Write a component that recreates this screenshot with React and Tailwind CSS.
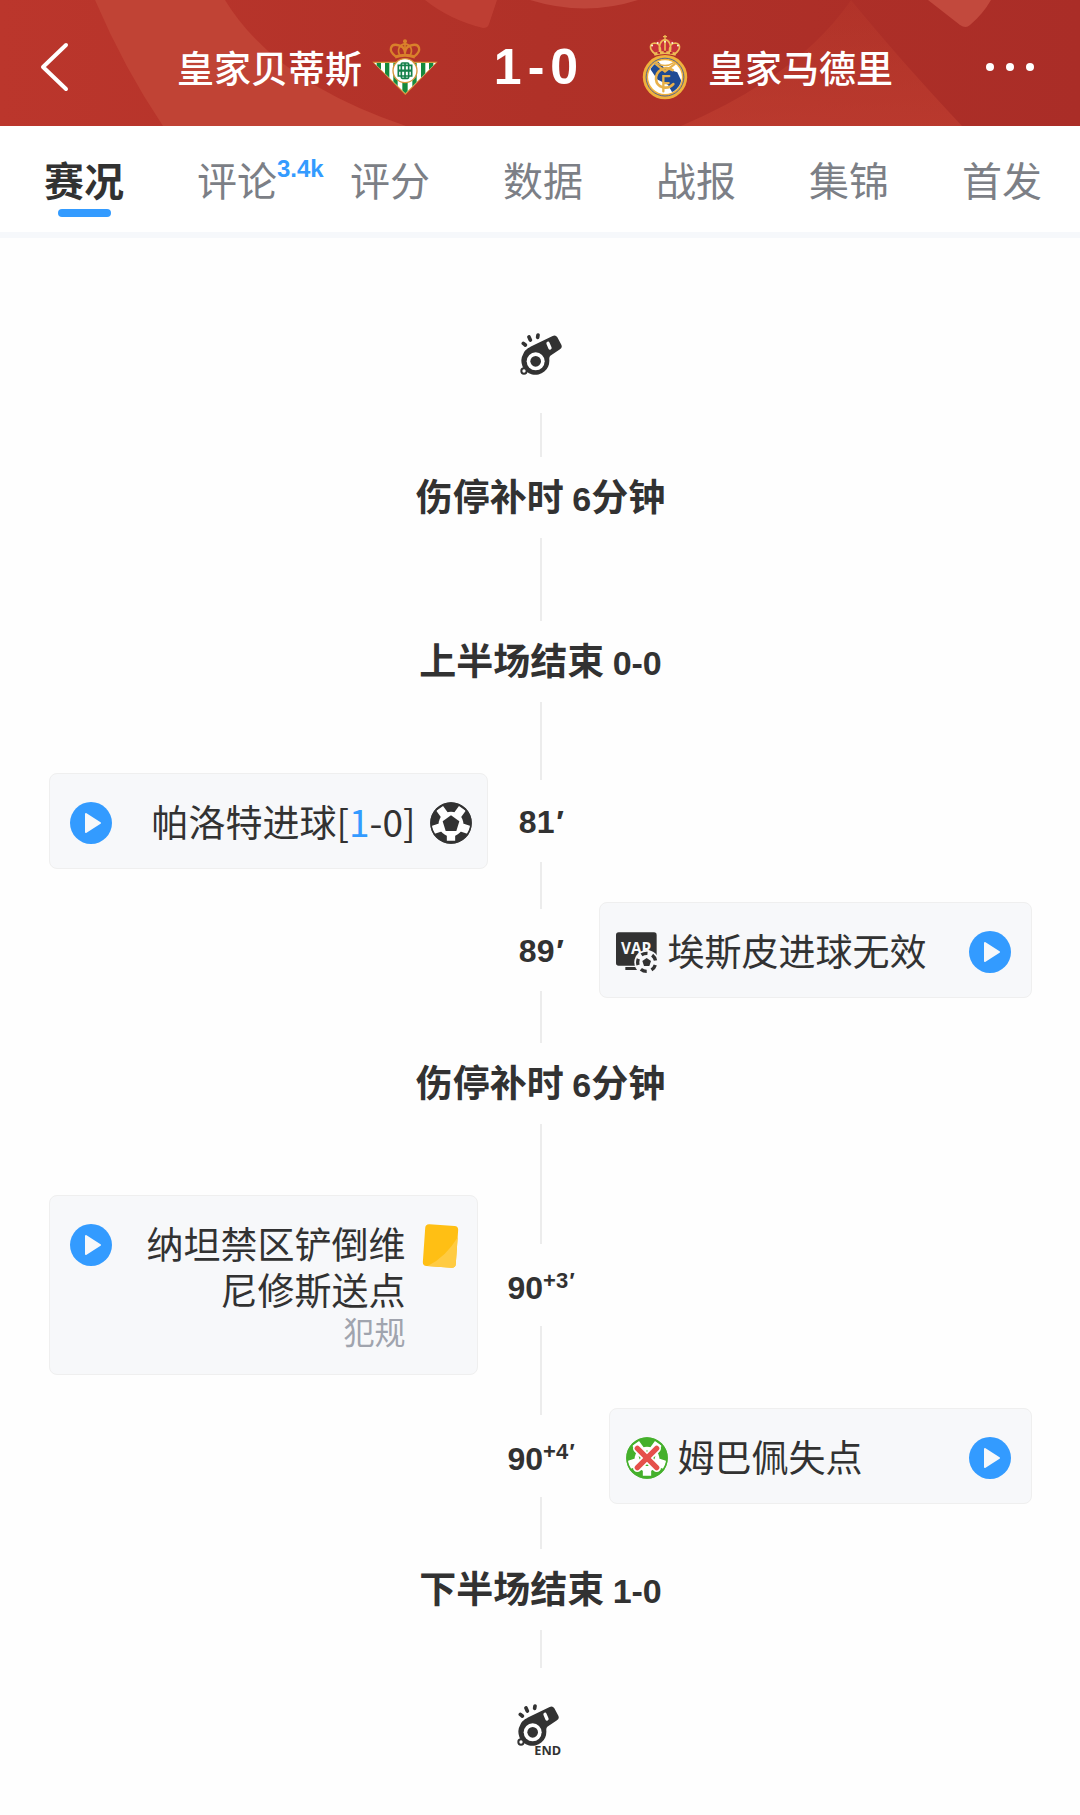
import React from "react";

const ink = "#323232";

function BackIcon() {
  return (
    <svg viewBox="0 0 32 52" className="h-[52px] w-8" fill="none" stroke="#fff" strokeWidth="4" strokeLinecap="round" strokeLinejoin="round" aria-hidden="true">
      <path d="M28 4 5 26l23 22" />
    </svg>
  );
}

function MoreIcon() {
  return (
    <svg viewBox="0 0 48 12" className="h-3 w-12" fill="#fff" aria-hidden="true">
      <circle cx="4" cy="6" r="4" />
      <circle cx="24" cy="6" r="4" />
      <circle cx="44" cy="6" r="4" />
    </svg>
  );
}

function BetisCrest() {
  return (
    <svg viewBox="0 0 198 168" className="h-14 w-[66px]" role="img" aria-label="皇家贝蒂斯">
      <defs>
        <clipPath id="betis-shield">
          <path d="M6 71H192L100 163Z" />
        </clipPath>
      </defs>
      <g fill="none" stroke="#d9812b" strokeWidth="7" strokeLinejoin="round">
        <path d="M71 52C46 34 57 14 76 18c12 2 22 10 23 22 1-12 11-20 23-22 19-4 30 16 5 34" />
        <path d="M84 50C74 32 82 18 99 14c17 4 25 18 15 36M99 14v32" strokeWidth="5" />
        <path d="M69 54q30-10 60 0" strokeWidth="9" />
      </g>
      <circle cx="99" cy="7" r="6" fill="#d9812b" />
      <path d="M1 68H197L100 168Z" fill="#d9953a" />
      <g clipPath="url(#betis-shield)">
        <path d="M0 68h198v100H0z" fill="#fff" />
        <path d="M14 68h13v100H14zM39 68h13v100H39zM64 68h13v100H64zM91 68h16v100H91zM121 68h13v100h-13zM147 68h13v100h-13zM171 68h13v100h-13z" fill="#15893d" />
      </g>
      <circle cx="99" cy="95" r="36" fill="#fff" stroke="#d9953a" strokeWidth="4" />
      <g fill="none" stroke="#15804a" strokeWidth="5">
        <rect x="88" y="72" width="22" height="46" rx="3" />
        <path d="M79 79h40v15H79zM79 96h40v15H79zM99 72v46" />
      </g>
    </svg>
  );
}

function MadridCrest() {
  return (
    <svg viewBox="0 0 138 196" className="h-[65px] w-[46px]" role="img" aria-label="皇家马德里">
      <defs>
        <clipPath id="madrid-disc">
          <circle cx="69" cy="127" r="50" />
        </clipPath>
      </defs>
      <path d="M38 58C20 44 22 26 40 24c10-14 20-14 29-10 9-4 19-4 29 10 18 2 20 20 2 34Z" fill="#c8323a" />
      <g fill="none" stroke="#eebb55" strokeWidth="5">
        <path d="M38 56C20 42 22 26 38 24c12 0 18 12 18 28M100 56c18-14 16-30 0-32-12 0-18 12-18 28M54 52c-6-20 2-36 15-38 13 2 21 18 15 38M69 14v38" />
        <path d="M69 0v14M63 5h12" strokeWidth="4" />
        <path d="M36 58q33-11 66 0" strokeWidth="9" />
      </g>
      <g fill="#fff4dc">
        <circle cx="30" cy="32" r="3" />
        <circle cx="47" cy="24" r="3" />
        <circle cx="69" cy="20" r="3" />
        <circle cx="91" cy="24" r="3" />
        <circle cx="108" cy="32" r="3" />
      </g>
      <path d="M46 54h8M65 50h8M84 54h8" stroke="#b3232f" strokeWidth="5" />
      <circle cx="69" cy="127" r="67" fill="#f0b23c" />
      <circle cx="69" cy="127" r="57" fill="none" stroke="#54628f" strokeWidth="3" />
      <circle cx="69" cy="127" r="51" fill="#fff" />
      <path clipPath="url(#madrid-disc)" d="M20 96 46 78 68 100 106 112 124 150 100 190 78 150 46 134Z" fill="#1f4a94" />
      <g fill="none" stroke="#e8b04a" strokeWidth="8" strokeLinecap="round">
        <path d="M92 106c-22-14-52 0-50 28 2 24 34 34 52 14" />
        <path d="M42 88 69 110 98 88" strokeWidth="7" />
        <path d="M64 170v-46h18M64 145h16" strokeWidth="7" />
        <path d="M44 84q25 16 50 0" strokeWidth="5" />
      </g>
    </svg>
  );
}

function WhistleShape() {
  return (
    <g>
      <g stroke={ink} strokeWidth="11" strokeLinecap="round">
        <path d="m10 31 6 5M27 12l4 9M54 6l-1 7" />
      </g>
      <path d="M10 62C16 48 30 42 42 36L98 9q9-4 14 4l12 22q4 9-4 14L91 68q-4 4-3 13a42 42 0 1 1-78-19Z" fill={ink} />
      <circle cx="47" cy="85" r="27" fill="#fff" />
      <circle cx="47" cy="85" r="16" fill={ink} />
      <path d="m84 31 6 14" stroke="#fff" strokeWidth="10" strokeLinecap="round" />
      <circle cx="12" cy="114" r="8" fill="#fff" stroke={ink} strokeWidth="6" />
    </g>
  );
}

function Whistle() {
  return (
    <svg viewBox="0 0 126 126" className="size-[42px]" role="img" aria-label="比赛开始">
      <WhistleShape />
    </svg>
  );
}

function WhistleEnd() {
  return (
    <svg viewBox="0 0 144 174" className="h-[58px] w-12" role="img" aria-label="END">
      <WhistleShape />
      <text x="52" y="153" fontSize="38" fontWeight="700" fontFamily="Open Sans, sans-serif" fill={ink}>
        END
      </text>
    </svg>
  );
}

function BallPattern({ color }) {
  return (
    <g>
      <circle cx="63" cy="63" r="62" fill={color} />
      <circle cx="63" cy="66" r="37" fill="#fff" />
      <path d="M63 66 29 19M63 66 97 19M63 66 8 84M63 66 118 84M63 66v50" stroke="#fff" strokeWidth="25" />
      <path d="M63 40 88 58 79 87H47L38 58Z" fill={color} />
      <circle cx="63" cy="63" r="60" fill="none" stroke={color} strokeWidth="5" />
    </g>
  );
}

function GoalIcon() {
  return (
    <svg viewBox="0 0 126 126" className="size-[42px]" role="img" aria-label="进球">
      <BallPattern color={ink} />
    </svg>
  );
}

function MissIcon() {
  return (
    <svg viewBox="0 0 126 126" className="size-[42px]" role="img" aria-label="失点">
      <BallPattern color="#45b02c" />
      <path d="m34 34 58 58M92 34 34 92" stroke="#fff" strokeWidth="26" strokeLinecap="round" />
      <path d="m34 34 58 58M92 34 34 92" stroke="#e5504b" strokeWidth="16" strokeLinecap="round" />
    </svg>
  );
}

function VarIcon() {
  return (
    <svg viewBox="0 0 126 126" className="size-[42px]" role="img" aria-label="VAR">
      <rect x="0" y="4" width="122" height="100" rx="8" fill={ink} />
      <path d="M28 108h50v9H28z" fill={ink} />
      <text x="61" y="68" textAnchor="middle" fontSize="46" fontWeight="700" fontFamily="Open Sans, sans-serif" fill="#f7f8fa">
        VAR
      </text>
      <circle cx="92" cy="94" r="37" fill="#f7f8fa" />
      <circle cx="92" cy="94" r="27" fill="none" stroke={ink} strokeWidth="10" strokeDasharray="19 15" strokeDashoffset="26" />
      <path d="M92 81 105 90 100 105H84L79 90Z" fill={ink} />
    </svg>
  );
}

function YellowCardIcon() {
  return (
    <svg viewBox="0 0 42 44" className="h-11 w-[42px]" role="img" aria-label="黄牌">
      <g transform="rotate(4 21 22)">
        <rect x="4" y="1" width="33" height="42" rx="4" fill="#ffbf14" />
        <path d="M37 12v27q0 4-4 4H9Q27 32 37 12Z" fill="#ffcb42" />
      </g>
    </svg>
  );
}

function PlayButton({ label }) {
  return (
    <button type="button" aria-label={`播放：${label}`} className="mt-1 shrink-0">
      <svg viewBox="0 0 42 42" className="size-[42px]" aria-hidden="true">
        <circle cx="21" cy="21" r="21" fill="#339bff" />
        <path d="M16 12 30 21 16 30Z" fill="#f7f8fa" stroke="#f7f8fa" strokeWidth="2" strokeLinejoin="round" />
      </svg>
    </button>
  );
}

function HeaderBackdrop() {
  return (
    <svg viewBox="0 0 1080 126" preserveAspectRatio="none" className="absolute inset-0 h-full w-full" aria-hidden="true">
      <defs>
        <linearGradient id="hdr" x1="0" x2="1">
          <stop offset="0" stopColor="#bb362c" />
          <stop offset=".5" stopColor="#b03128" />
          <stop offset="1" stopColor="#aa2d27" />
        </linearGradient>
        <linearGradient id="peak" x1="0" x2="0" y1="0" y2="1">
          <stop offset="0" stopColor="#c2422f" stopOpacity=".2" />
          <stop offset="1" stopColor="#c24032" stopOpacity=".6" />
        </linearGradient>
      </defs>
      <path d="M0 0h1080v126H0z" fill="url(#hdr)" />
      <path d="M95 0Q124 68 163 126H406Q275 82 225 0Z" fill="#c04335" />
      <path d="M425 0Q450 20 483 28 488 28 489 24L497 0Z" fill="#be3e33" />
      <path d="M530 0Q585 17 638 0Z" fill="#bf463b" />
      <path d="M851 0Q800 75 681 126H962Q900 60 851 0Z" fill="url(#peak)" />
      <path d="M928 0 960 25q6 4 10 0Q983 14 991 0Z" fill="#c2493d" />
    </svg>
  );
}

const tabs = [
  { name: "赛况", active: true },
  { name: "评论", count: "3.4k" },
  { name: "评分" },
  { name: "数据" },
  { name: "战报" },
  { name: "集锦" },
  { name: "首发" },
];

function Line({ className }) {
  return <div className={`w-[2px] bg-[#ececec] ${className}`} />;
}

function Period({ name, value, suffix, tail = "h-[54px]" }) {
  return (
    <li className="flex flex-col items-center">
      <Line className="h-[29px]" />
      <h2 className="flex h-[81px] items-center text-[37px] leading-[45px] font-bold">
        <span>
          {name} <span className="font-['Liberation_Sans'] text-[34px]">{value}</span>
          {suffix}
        </span>
      </h2>
      <Line className={tail} />
    </li>
  );
}

function Minute({ minute, extra }) {
  return (
    <div className={`flex flex-col items-center ${extra ? "w-[102px]" : "w-[82px]"}`}>
      <Line className="flex-1" />
      <time className={`flex h-[82px] items-center justify-center font-['Liberation_Sans'] text-[32px] leading-[45px] font-bold ${extra ? "pt-2" : "pt-1"}`}>
        <span>
          {minute}
          {extra ? <sup className="text-[22px] leading-none">{extra}</sup> : null}
          {extra ? <sup className="text-[22px] leading-none italic">′</sup> : <span className="italic">′</span>}
        </span>
      </time>
      <Line className="flex-1" />
    </div>
  );
}

function HomeEvent({ label, minute, extra, icon, children, note }) {
  return (
    <li className="grid grid-cols-[1fr_auto_1fr]">
      <div className="mt-[17px] mr-3 mb-4 flex items-start rounded-lg border border-[#efefef] bg-[#f7f8fa] py-6 pr-[15px] pl-5">
        <PlayButton label={label} />
        <div className="flex-1 pl-6 text-right">
          <p className="text-[37px] leading-[46px]">{children}</p>
          {note ? <p className="text-[31px] leading-[38px] text-[#a0a4ae]">{note}</p> : null}
        </div>
        <div className="mt-1 ml-[14px] shrink-0">{icon}</div>
      </div>
      <Minute minute={minute} extra={extra} />
      <div />
    </li>
  );
}

function AwayEvent({ label, minute, extra, icon }) {
  return (
    <li className="grid grid-cols-[1fr_auto_1fr]">
      <div />
      <Minute minute={minute} extra={extra} />
      <div className="mt-[17px] mb-4 ml-[17px] flex items-start rounded-lg border border-[#efefef] bg-[#f7f8fa] py-6 pr-5 pl-4">
        <div className="mt-1 mr-[10px] shrink-0">{icon}</div>
        <p className="flex-1 text-[37px] leading-[46px]">{label}</p>
        <PlayButton label={label} />
      </div>
    </li>
  );
}

export default function App() {
  return (
    <div className="min-h-screen bg-[#fefefe] font-['Noto_Sans_CJK_SC',sans-serif] text-[#323232]">
      <header className="relative h-[126px] overflow-hidden text-white">
        <HeaderBackdrop />
        <div className="relative grid h-full grid-cols-[1fr_204px_1fr] items-center pt-2">
          <div className="flex items-center justify-between pl-[38px]">
            <button type="button" aria-label="返回">
              <BackIcon />
            </button>
            <div className="flex items-center">
              <span className="text-[37px] leading-[48px] font-medium">皇家贝蒂斯</span>
              <span className="ml-[10px]">
                <BetisCrest />
              </span>
            </div>
          </div>
          <h1 className="flex justify-center gap-[6px] pr-2 font-['Liberation_Sans'] text-[50px] leading-[60px] font-bold">
            <span>1</span>
            <span>-</span>
            <span>0</span>
          </h1>
          <div className="flex items-center justify-between pr-[46px]">
            <div className="flex items-center">
              <MadridCrest />
              <span className="ml-5 text-[37px] leading-[48px] font-medium">皇家马德里</span>
            </div>
            <button type="button" aria-label="更多">
              <MoreIcon />
            </button>
          </div>
        </div>
      </header>

      <nav className="flex h-28 justify-between border-b-[6px] border-[#f6f8fb] bg-white pt-[23px] pr-[38px] pl-11">
        {tabs.map((tab) => (
          <button
            key={tab.name}
            type="button"
            aria-current={tab.active ? "page" : undefined}
            className={`relative flex flex-col items-center text-[40px] leading-[60px] whitespace-nowrap ${tab.active ? "font-bold text-[#323232]" : "text-[#7c7f86]"}`}
          >
            {tab.name}
            {tab.active ? <span className="h-2 w-[53px] rounded-full bg-[#339bff]" /> : null}
            {tab.count ? (
              <span className="absolute top-1 left-full font-['Liberation_Sans'] text-[24px] leading-8 font-bold text-[#339bff]">{tab.count}</span>
            ) : null}
          </button>
        ))}
      </nav>

      <main className="pr-12 pl-[49px]">
        <ol>
          <li className="flex flex-col items-center pt-[95px]">
            <Whistle />
            <Line className="mt-[38px] h-[15px]" />
          </li>
          <Period name="伤停补时" value="6" suffix="分钟" />
          <Period name="上半场结束" value="0-0" />
          <HomeEvent label="帕洛特进球" minute="81" icon={<GoalIcon />}>
            帕洛特进球[<span className="text-[#339bff]">1</span>-0]
          </HomeEvent>
          <AwayEvent label="埃斯皮进球无效" minute="89" icon={<VarIcon />} />
          <Period name="伤停补时" value="6" suffix="分钟" />
          <HomeEvent label="纳坦禁区铲倒维尼修斯送点" minute="90" extra="+3" icon={<YellowCardIcon />} note="犯规">
            纳坦禁区铲倒维尼修斯送点
          </HomeEvent>
          <AwayEvent label="姆巴佩失点" minute="90" extra="+4" icon={<MissIcon />} />
          <Period name="下半场结束" value="1-0" tail="h-[38px]" />
          <li className="flex justify-center pt-9 pb-12">
            <WhistleEnd />
          </li>
        </ol>
      </main>
    </div>
  );
}
